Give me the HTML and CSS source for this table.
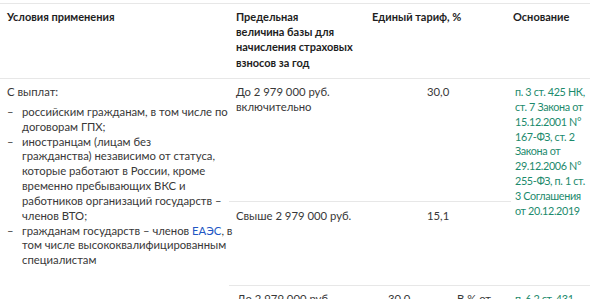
FILE: index.html
```html
<!DOCTYPE html>
<html lang="ru">
<head>
<meta charset="utf-8">
<link rel="stylesheet" href="styles.css">
</head>
<body>
<div class="rates">
  <div class="head">
    <div class="h c1">Условия применения</div>
    <div class="h c2">Предельная<br>величина базы для<br>начисления страховых<br>взносов за год</div>
    <div class="h c3">Единый тариф, %</div>
    <div class="h c4">Основание</div>
  </div>
  <div class="body">
    <div class="cond">
      <p class="lead">С выплат:</p>
      <ul>
        <li>российским гражданам, в том числе по<br>договорам ГПХ;</li>
        <li>иностранцам (лицам без<br>гражданства) независимо от статуса,<br>которые работают в России, кроме<br>временно пребывающих ВКС и<br>работников организаций государств –<br>членов ВТО;</li>
        <li>гражданам государств – членов <a class="link" href="#">ЕАЭС</a>, в<br>том числе высококвалифицированным<br>специалистам</li>
      </ul>
    </div>
    <div class="cell base r1">До 2 979 000 руб.<br>включительно</div>
    <div class="cell rate r1"><span class="val">30,0</span></div>
    <div class="cell basis r12">п. 3 ст. 425 НК,<br>ст. 7 Закона от<br>15.12.2001 N°<br>167-ФЗ, ст. 2<br>Закона от<br>29.12.2006 N°<br>255-ФЗ, п. 1 ст.<br>3 Соглашения<br>от 20.12.2019</div>
    <div class="cell base r2 sep">Свыше 2 979 000 руб.</div>
    <div class="cell rate r2 sep"><span class="val">15,1</span></div>
    <div class="cell base r3 sep last">До 2 979 000 руб.</div>
    <div class="cell rate r3 sep split"><span class="v3">30,0</span><span class="pct">В % от</span></div>
    <div class="cell basis r3 sep">п. 6.2 ст. 431</div>
  </div>
</div>
</body>
</html>
```
FILE: styles.css
```css
html, body {
  margin: 0;
  padding: 0;
  background: #fff;
}
body {
  font-family: "Lato", "Liberation Sans", sans-serif;
  font-size: 11.3px;
  line-height: 14.85px;
  color: #383838;
  overflow: hidden;
  height: 299px;
}
.rates {
  margin-top: 3px;
  width: 590px;
}
.head {
  display: grid;
  grid-template-columns: 229px 136px 146px 79px;
  border-top: 1px solid #e7e7e7;
  border-bottom: 1px solid #e7e7e7;
  box-sizing: border-box;
  height: 76px;
}
.h {
  font-weight: 700;
  font-size: 11px;
  line-height: 15.2px;
  color: #1e1e1e;
  padding: 5px 7px 0 7px;
  white-space: nowrap;
}
.h.c4 { padding-left: 2px; }
.body {
  display: grid;
  grid-template-columns: 229px 136px 146px 79px;
  grid-template-rows: 122px 84px auto;
}
.cond {
  grid-column: 1;
  grid-row: 1 / 4;
  padding: 6px 6px 0 7px;
  white-space: nowrap;
}
.cond p.lead { margin: 0 0 5px; }
.cond ul {
  list-style: none;
  margin: 0;
  padding: 0;
}
.cond li {
  position: relative;
  padding-left: 15px;
}
.cond li::before {
  content: "–";
  position: absolute;
  left: 0;
  top: 0;
}
.link { color: #2156c4; text-decoration: none; }
.cell {
  padding: 6px 7px 0 7px;
  white-space: nowrap;
}
.sep { border-top: 1px solid #e7e7e7; }
.r1 { grid-row: 1; }
.r2 { grid-row: 2; padding-top: 7px; }
.r3 { grid-row: 3; padding-top: 6px; }
.base { grid-column: 2; }
.rate { grid-column: 3; }
.basis {
  grid-column: 4;
  color: #1c8a6c;
  padding-left: 4px;
  padding-right: 0;
  font-size: 10.8px;
  letter-spacing: -0.35px;
}
.r12 { grid-row: 1 / 3; }
.val { display: inline-block; padding-left: 55px; }
.r3.last { padding-left: 8px; }
.split { display: flex; }
.v3 { width: 69px; padding-left: 16px; }
```
